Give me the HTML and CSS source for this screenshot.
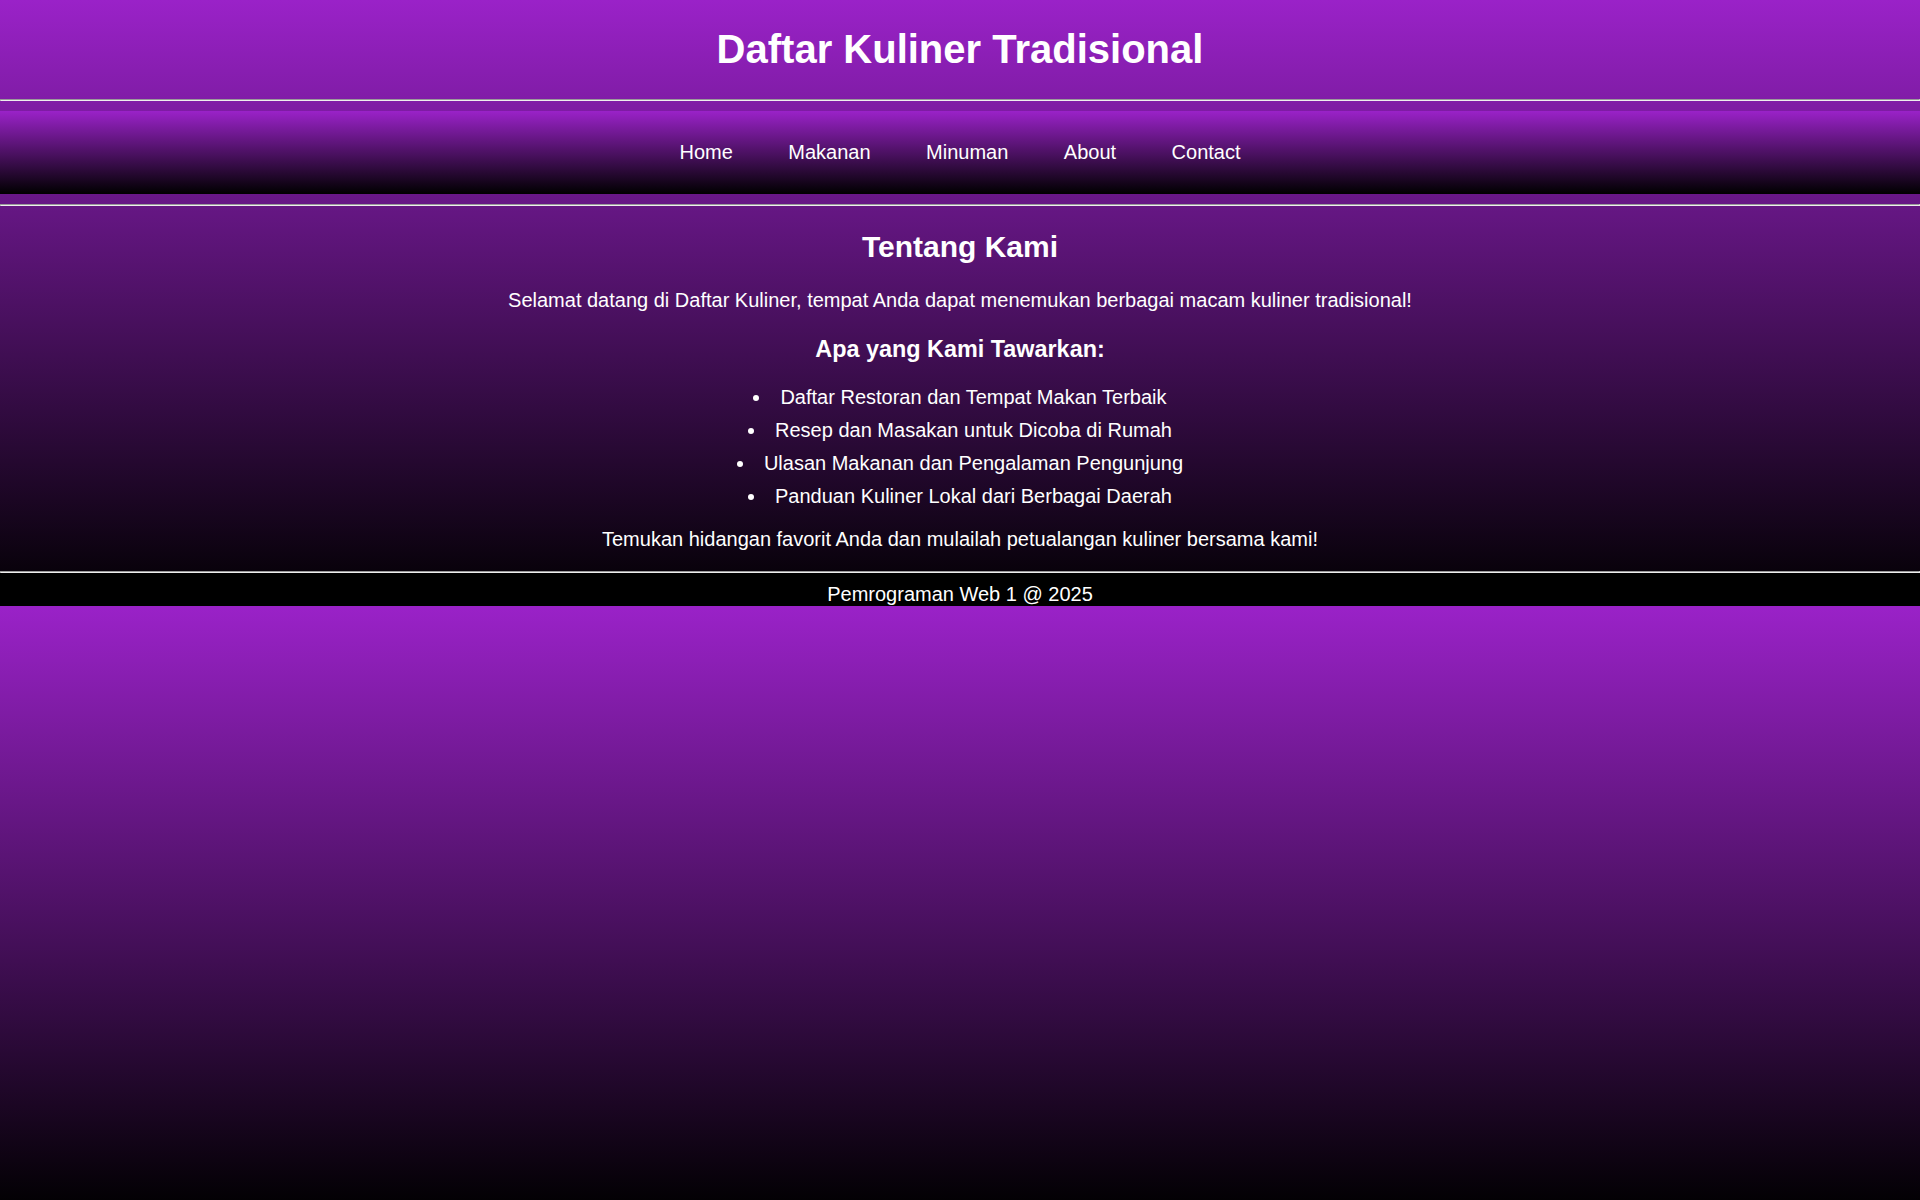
FILE: index.html
```html
<!DOCTYPE html>
<html lang="id">
<head>
<meta charset="utf-8">
<title>Daftar Kuliner Tradisional</title>
<link rel="stylesheet" href="styles.css">
</head>
<body>
<header class="site-header">
  <h1 class="site-title">Daftar Kuliner Tradisional</h1>
</header>
<hr class="rule">
<nav class="main-nav">
  <ul class="nav-list">
    <li class="nav-item"><a class="nav-link" href="#">Home</a></li>
    <li class="nav-item"><a class="nav-link" href="#">Makanan</a></li>
    <li class="nav-item"><a class="nav-link" href="#">Minuman</a></li>
    <li class="nav-item"><a class="nav-link" href="#">About</a></li>
    <li class="nav-item"><a class="nav-link" href="#">Contact</a></li>
  </ul>
</nav>
<hr class="rule">
<section class="about">
  <h2 class="about-title">Tentang Kami</h2>
  <p class="about-text">Selamat datang di Daftar Kuliner, tempat Anda dapat menemukan berbagai macam kuliner tradisional!</p>
  <h3 class="about-subtitle">Apa yang Kami Tawarkan:</h3>
  <ul class="offer-list">
    <li class="offer-item">Daftar Restoran dan Tempat Makan Terbaik</li>
    <li class="offer-item">Resep dan Masakan untuk Dicoba di Rumah</li>
    <li class="offer-item">Ulasan Makanan dan Pengalaman Pengunjung</li>
    <li class="offer-item">Panduan Kuliner Lokal dari Berbagai Daerah</li>
  </ul>
  <p class="about-text">Temukan hidangan favorit Anda dan mulailah petualangan kuliner bersama kami!</p>
</section>
<footer class="site-footer">
  <hr class="rule">
  Pemrograman Web 1 @ 2025
</footer>
</body>
</html>
```
FILE: styles.css
```css
body {
  margin: 0;
  font-family: "Liberation Sans", Arial, sans-serif;
  font-size: 20px;
  color: #ffffff;
  text-align: center;
  background: linear-gradient(to bottom, #9a22c8, #000000);
}

.site-title {
  font-size: 2em;
  margin: 0.67em 0;
}

.rule {
  margin: 0.5em 0;
}

.main-nav {
  padding: 10px;
  background: linear-gradient(to bottom, #9a22c8, #000000);
}

.nav-list {
  list-style: none;
  margin: 1em 0;
  padding: 0;
  display: flex;
  justify-content: center;
  gap: 55.5px;
}

.nav-link {
  color: #ffffff;
  text-decoration: none;
}

.about-title {
  font-size: 1.5em;
  margin: 0.83em 0;
}

.about-text {
  margin: 1em 0;
}

.about-subtitle {
  font-size: 1.17em;
  margin: 1em 0;
}

.offer-list {
  list-style-position: inside;
  margin: 1em 0;
  padding: 0;
}

.offer-item {
  margin: 10px 0;
}

.site-footer {
  background: #000000;
}
```
